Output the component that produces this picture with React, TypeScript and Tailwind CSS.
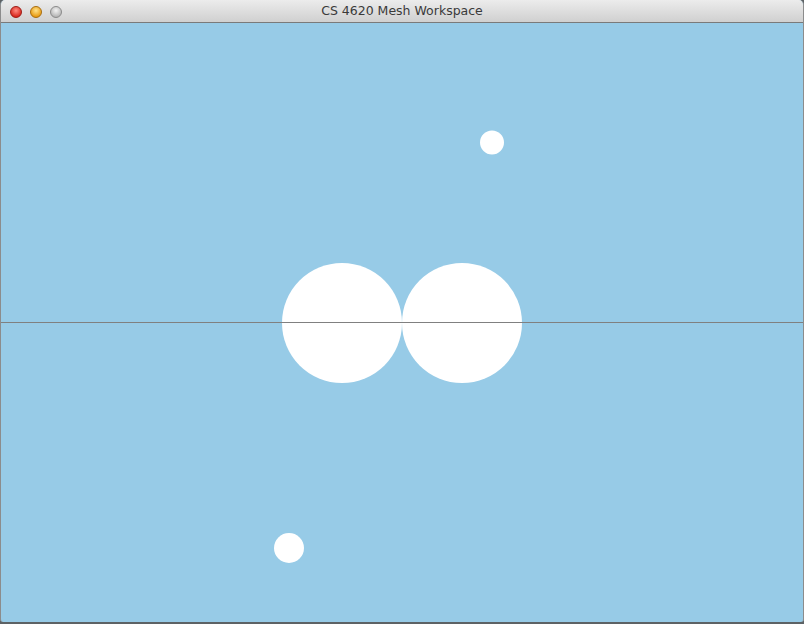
// CS 4620 Mesh Workspace — window with a canvas of circles

function TrafficLight({ from, to, ring }: { from: string; to: string; ring: string }) {
  return (
    <div
      className="h-[12px] w-[12px] rounded-full border"
      style={{
        background: `radial-gradient(circle at 50% 35%, ${from} 0%, ${to} 75%)`,
        borderColor: ring,
      }}
    />
  );
}

export default function App() {
  return (
    <div className="h-[624px] w-[804px] overflow-hidden bg-[#5d6265]">
      <div className="flex h-[622px] w-[804px] flex-col overflow-hidden rounded-t-[5px] rounded-b-[3px] border-x border-[#8c8c8c] bg-[#97cbe7]">
        <div className="relative flex h-[23px] shrink-0 items-center border-b border-[#7a7a7a] bg-gradient-to-b from-[#ececec] to-[#d0d0d0]">
          <div className="absolute left-[9px] top-[6px] flex gap-[8px]">
            <TrafficLight from="#ff8a80" to="#d7261c" ring="#9e1a14" />
            <TrafficLight from="#ffe28a" to="#e79a12" ring="#a86c0c" />
            <TrafficLight from="#f2f2f2" to="#b5b5b5" ring="#8a8a8a" />
          </div>
          <div
            className="w-full text-center text-[12.5px] text-[#3a3a3a]"
            style={{ fontFamily: '"DejaVu Sans", "Liberation Sans", sans-serif' }}
          >
            CS 4620 Mesh Workspace
          </div>
        </div>
        <div className="flex-1">
          <svg width="802" height="599" viewBox="0 0 802 599" className="block">
            <circle cx="341" cy="300" r="60" fill="#ffffff" />
            <circle cx="461" cy="300" r="60" fill="#ffffff" />
            <circle cx="491" cy="119.5" r="12" fill="#ffffff" />
            <circle cx="288" cy="525" r="15" fill="#ffffff" />
            <line x1="0" y1="299.5" x2="802" y2="299.5" stroke="#808080" strokeWidth="1" />
          </svg>
        </div>
      </div>
    </div>
  );
}
